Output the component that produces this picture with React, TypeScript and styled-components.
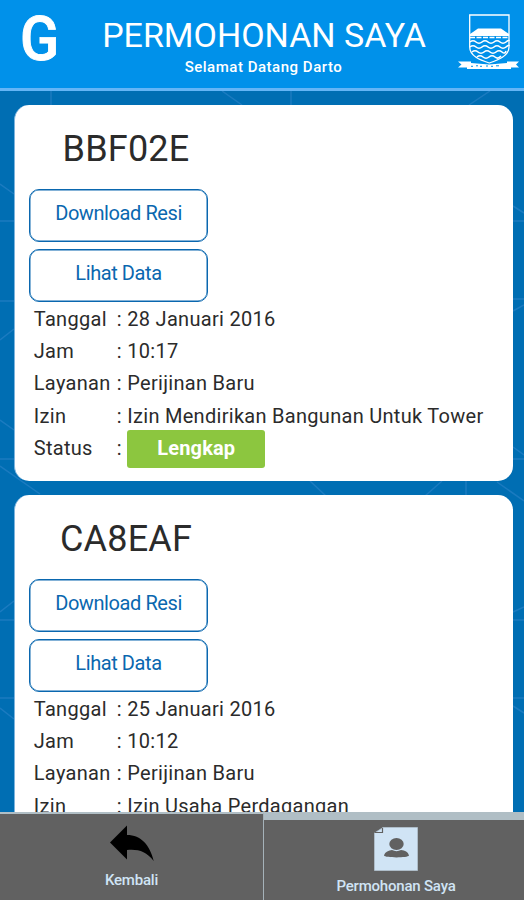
import React from "react";
import styled, { createGlobalStyle } from "styled-components";

const GlobalStyle = createGlobalStyle`
  * { box-sizing: border-box; }
  body { margin: 0; background: #006eb3; font-family: Roboto, sans-serif; }
`;

const Screen = styled.div`
  width: 524px;
  height: 900px;
  display: flex;
  flex-direction: column;
  overflow: hidden;
  background: #006eb3;
`;

const Header = styled.header`
  height: 91px;
  flex: none;
  display: grid;
  grid-template-columns: 80px 1fr 72px;
  background: #0091ea;
  border-bottom: 3px solid #64b5f6;
  color: #fff;
`;

const MenuMark = styled.div`
  padding: 6px 0 0 20px;
  font-size: 61px;
  font-weight: 500;
  line-height: 66px;
  -webkit-text-stroke: 0.9px #fff;
  transform: scaleX(0.94);
  transform-origin: 20px 0;
`;

const Titles = styled.div`
  padding: 15px 0 0 16px;
  text-align: center;
  margin-left: -5px;
  margin-right: 16px;
  white-space: nowrap;
`;

const Title = styled.h1`
  margin: 0 -1px 0 0;
  font-size: 34px;
  line-height: 41px;
  font-weight: 400;
`;

const Subtitle = styled.div`
  font-size: 15px;
  line-height: 22px;
  font-weight: 500;
  letter-spacing: 0.52px;
`;

const Crest = styled.svg`
  margin: 12px 0 0 5px;
`;

const Main = styled.main`
  flex: 1;
  min-height: 0;
  overflow: hidden;
  display: grid;
`;

const Pattern = styled.svg`
  grid-area: 1 / 1;
`;

const List = styled.div`
  grid-area: 1 / 1;
  z-index: 1;
  height: 721px;
  overflow: hidden;
  padding: 14px 11px 0 14px;
  display: flex;
  flex-direction: column;
  gap: 14px;
`;

const Card = styled.article`
  flex: none;
  height: 376px;
  padding: 23px 15px 0 14px;
  background: #fff;
  border-left: 1px solid #7db4de;
  border-radius: 15px;
  color: #2b2b2b;
`;

const Code = styled.h2`
  width: 194px;
  margin: 0 0 19px;
  text-align: center;
  font-size: 36px;
  line-height: 42px;
  font-weight: 400;
  letter-spacing: 0.2px;
`;

const OutlineButton = styled.button`
  display: block;
  width: 179px;
  height: 53px;
  margin: 0 0 7px;
  padding: 0 0 5px;
  background: #fff;
  border: 1px solid #0a67af;
  box-shadow: inset 0 0 0 0.5px #0a67af;
  border-radius: 10px;
  color: #0a67af;
  font: 400 20px/24px Roboto, sans-serif;
  letter-spacing: -0.42px;
`;

const Details = styled.dl`
  display: grid;
  grid-template-columns: 83px 10.5px 1fr;
  grid-auto-rows: 32.3px;
  margin: -7px 0 0 4.8px;
  padding-top: 6.7px;
  font-size: 20px;
  line-height: 20px;
  letter-spacing: 0.29px;
  white-space: nowrap;
`;

const Cell = styled.dd`
  margin: 0;
`;

const Badge = styled.span`
  display: block;
  width: 138px;
  height: 38px;
  margin-top: -8px;
  border-radius: 3px;
  background: #8cc63f;
  color: #fff;
  text-align: center;
  font-weight: 700;
  line-height: 37px;
  letter-spacing: 0.15px;
`;

const Tabs = styled.nav`
  flex: none;
  height: 88px;
  display: grid;
  grid-template-columns: 264px 260px;
`;

const Tab = styled.button<{ $active?: boolean }>`
  display: flex;
  flex-direction: column;
  align-items: center;
  margin: 0;
  padding: ${(p) => (p.$active ? "7px 0 0 4px" : "11px 0 0 0")};
  background: #616161;
  border: 0;
  border-top: ${(p) => (p.$active ? "8px" : "2px")} solid #b0bec5;
  border-right: ${(p) => (p.$active ? "0" : "1.5px solid #a5b2b9")};
  color: #d0e4f5;
  font: 500 15px/18px Roboto, sans-serif;
  letter-spacing: -0.2px;
`;

const TabLabel = styled.span<{ $gap: number }>`
  margin-top: ${(p) => p.$gap}px;
`;

const backgroundLines =
  "M0 93L14 103M0 130H14M0 210H14M0 249L14 238M0 329L14 339M0 368H14M0 375L40 403M0 521L14 510M0 529H14M0 607H14M0 617L14 628" +
  "M51 0V14M222 0L242 14M291 0V14M490 0L469 14M513 115L524 122M513 130H524M513 208H524M513 220L524 214M513 356L524 364M513 368H524M497 391L524 410M466 390V405M442 390L425 405M310 390L326 405M513 521L524 516M513 529H524M513 607H524M513 615L524 622";

interface Application {
  code: string;
  date: string;
  time: string;
  service: string;
  permit: string;
}

const applications: Application[] = [
  {
    code: "BBF02E",
    date: "28 Januari 2016",
    time: "10:17",
    service: "Perijinan Baru",
    permit: "Izin Mendirikan Bangunan Untuk Tower",
  },
  {
    code: "CA8EAF",
    date: "25 Januari 2016",
    time: "10:12",
    service: "Perijinan Baru",
    permit: "Izin Usaha Perdagangan",
  },
];

function ApplicationCard({ item }: { item: Application }) {
  const rows: [string, React.ReactNode][] = [
    ["Tanggal", item.date],
    ["Jam", item.time],
    ["Layanan", item.service],
    ["Izin", item.permit],
    ["Status", <Badge key="status">Lengkap</Badge>],
  ];
  return (
    <Card>
      <Code>{item.code}</Code>
      <OutlineButton>Download Resi</OutlineButton>
      <OutlineButton>Lihat Data</OutlineButton>
      <Details>
        {rows.map(([label, value]) => (
          <React.Fragment key={label}>
            <Cell as="dt">{label}</Cell>
            <Cell>:</Cell>
            <Cell>{value}</Cell>
          </React.Fragment>
        ))}
      </Details>
    </Card>
  );
}

function CityCrest() {
  return (
    <Crest width="64" height="60" viewBox="457 12 64 60" fill="none" stroke="#fff">
      <path d="M469.700 15H509V47C509 56 498 60 489.300 63C480 60 469.700 56 469.700 47Z" strokeWidth="1.3" />
      <path d="M470 34L473 32L478 28.500H501L506 32L509 34V36H470Z" fill="#fff" stroke="none" />
      <path d="M470 37.500H509" strokeWidth="1.5" strokeDasharray="5 1.500" />
      <g strokeWidth="1.6">
        <path d="M470 42q3-2.500 6 0t6 0 6 0 6 0 6 0 6 0 3-1" />
        <path d="M470 47q3-2.500 6 0t6 0 6 0 6 0 6 0 6 0 3-1" />
        <path d="M472 52q3-2.500 6 0t6 0 6 0 6 0 6 0 4-1" />
        <path d="M477 57q3-2.500 6 0t6 0 6 0 6-1" />
      </g>
      <path d="M458 61.500L471 61.500V63L489 64.500L507 63V61.500L519 61.500L516 64.500L519 67.500L511 67.500V69H467V67.500L458 67.500L461.500 64.500Z" fill="#fff" stroke="none" />
      <path d="M471 66.300h2m3-.5h2m2 .5h2m4-.3h2m3 .3h2m3-.5h3" stroke="#0091ea" strokeWidth="1" />
    </Crest>
  );
}

export default function App() {
  return (
    <>
      <GlobalStyle />
      <Screen>
        <Header>
          <MenuMark>G</MenuMark>
          <Titles>
            <Title>PERMOHONAN SAYA</Title>
            <Subtitle>Selamat Datang Darto</Subtitle>
          </Titles>
          <CityCrest />
        </Header>
        <Main>
          <Pattern width="524" height="721">
            <path d={backgroundLines} fill="none" stroke="#1b7bc0" strokeWidth="1.5" />
          </Pattern>
          <List>
            {applications.map((item) => (
              <ApplicationCard key={item.code} item={item} />
            ))}
          </List>
        </Main>
        <Tabs>
          <Tab>
            <svg width="44" height="36" viewBox="0 0 44 36">
              <path d="M0 17.500L17 0.500V10C31 10 40 20 43.700 36C36 26 28 24 17 25V34.500Z" fill="#000" />
            </svg>
            <TabLabel $gap={10}>Kembali</TabLabel>
          </Tab>
          <Tab $active>
            <svg width="44" height="44" viewBox="0 0 44 44">
              <path d="M0.500 6L9 0.500H43.500V43.500H0.500Z" fill="#d0e4f5" stroke="#b4c4d1" strokeWidth="0.8" />
              <path d="M1 5.500H8.500V1" fill="none" stroke="#616161" strokeWidth="1.2" />
              <ellipse cx="22.500" cy="17" rx="7.200" ry="6" fill="#616161" />
              <path d="M10 28.500C11 24.500 15 23.500 18 23C21 24.500 24 24.500 27 23C31 23.500 34 24.500 35 28.500C34 31 11 31 10 28.500Z" fill="#616161" />
            </svg>
            <TabLabel $gap={6}>Permohonan Saya</TabLabel>
          </Tab>
        </Tabs>
      </Screen>
    </>
  );
}
